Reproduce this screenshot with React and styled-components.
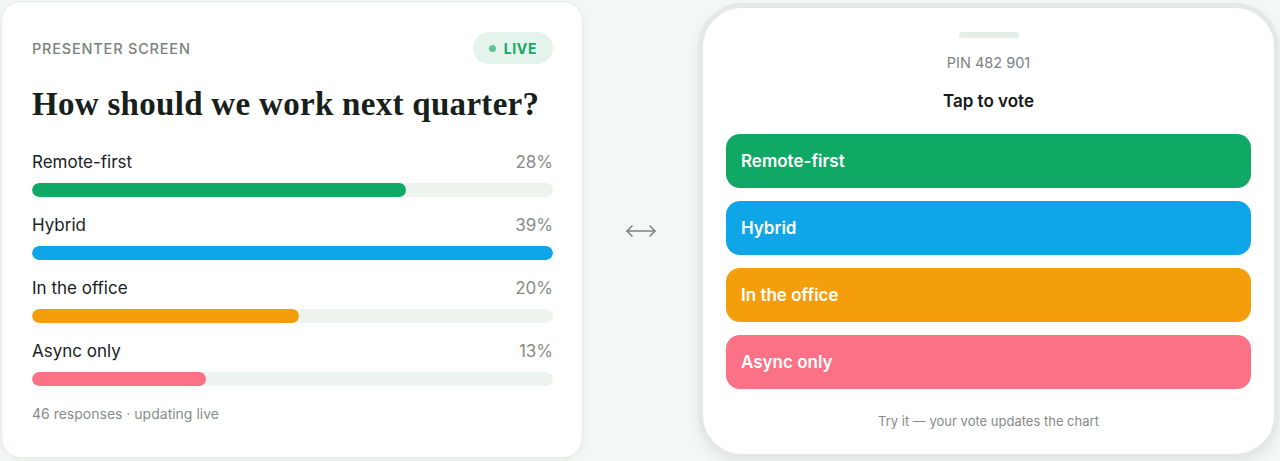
import React from 'react';
import styled, { createGlobalStyle } from 'styled-components';

const GlobalStyle = createGlobalStyle`
  html, body {
    margin: 0;
    padding: 0;
    background: #f3f7f5;
    font-family: Inter, "Liberation Sans", sans-serif;
    -webkit-font-smoothing: antialiased;
  }
`;

const options = [
  { label: 'Remote-first', pct: 28, color: '#10a865' },
  { label: 'Hybrid', pct: 39, color: '#0ea5e9' },
  { label: 'In the office', pct: 20, color: '#f59e0b' },
  { label: 'Async only', pct: 13, color: '#fb7185' },
];

const Stage = styled.div`
  display: flex;
  align-items: flex-start;
  padding: 1px 0 0 1px;
`;

const Card = styled.section`
  box-sizing: border-box;
  width: 582px;
  height: 457px;
  padding: 30px 29px 30px 30px;
  background: #fff;
  border: 1px solid #e6ebe8;
  border-radius: 20px;
  box-shadow: 0 4px 14px rgba(20, 40, 30, 0.04);
  display: flex;
  flex-direction: column;
`;

const Header = styled.div`
  display: flex;
  align-items: center;
  justify-content: space-between;
  height: 32px;
`;

const Eyebrow = styled.span`
  font-size: 14.5px;
  font-weight: 500;
  letter-spacing: 0.8px;
  text-transform: uppercase;
  color: #7c837f;
`;

const LivePill = styled.span`
  display: inline-flex;
  align-items: center;
  gap: 8px;
  height: 32px;
  padding: 0 16px;
  border-radius: 16px;
  background: #e4f4ec;
  color: #17a566;
  font-size: 14px;
  font-weight: 700;
  letter-spacing: 0.6px;
`;

const Dot = styled.span`
  width: 7px;
  height: 7px;
  border-radius: 50%;
  background: #5cc595;
`;

const Title = styled.h1`
  margin: 22px 0 0;
  font-family: "Liberation Serif", "DejaVu Serif", serif;
  font-size: 33px;
  line-height: 36px;
  font-weight: 700;
  letter-spacing: 0.3px;
  white-space: nowrap;
  color: #17201b;
`;

const Results = styled.div`
  margin-top: 29px;
  display: flex;
  flex-direction: column;
  gap: 17px;
`;

const Row = styled.div`
  display: flex;
  flex-direction: column;
  gap: 10px;
`;

const RowHead = styled.div`
  display: flex;
  justify-content: space-between;
  font-size: 17px;
  line-height: 22px;
`;

const Label = styled.span`
  color: #1b211e;
`;

const Pct = styled.span`
  color: #868c89;
`;

const Track = styled.div`
  height: 14px;
  border-radius: 7px;
  background: #edf3ef;
  overflow: hidden;
`;

const Fill = styled.div`
  height: 100%;
  border-radius: 7px;
  background: ${(p) => p.$color};
`;

const Footnote = styled.p`
  margin: 18px 0 0;
  font-size: 14px;
  line-height: 20px;
  color: #878d8a;
`;

const Bridge = styled.div`
  width: 115px;
  height: 460px;
  display: flex;
  align-items: center;
  justify-content: center;
  color: #7e8581;
`;

const Phone = styled.section`
  box-sizing: border-box;
  width: 581px;
  height: 456px;
  margin-top: 2px;
  padding: 24px 23px 0;
  background: #fff;
  border: 5px solid #e4e8e6;
  border-radius: 44px;
  box-shadow: 0 6px 14px rgba(20, 40, 30, 0.06);
  display: flex;
  flex-direction: column;
  align-items: stretch;
`;

const Handle = styled.div`
  align-self: center;
  width: 60px;
  height: 6px;
  border-radius: 3px;
  background: #e5efea;
`;

const Pin = styled.div`
  margin-top: 15px;
  text-align: center;
  font-size: 14.5px;
  line-height: 20px;
  color: #7c827f;
`;

const Prompt = styled.div`
  margin-top: 17px;
  text-align: center;
  font-size: 17px;
  line-height: 22px;
  font-weight: 600;
  color: #141a17;
`;

const Choices = styled.div`
  margin-top: 22px;
  display: flex;
  flex-direction: column;
  gap: 13px;
`;

const Choice = styled.button`
  height: 54px;
  border: 0;
  border-radius: 14px;
  padding: 0 15px;
  text-align: left;
  font-family: inherit;
  font-size: 17px;
  font-weight: 600;
  color: #fff;
  background: ${(p) => p.$color};
  cursor: pointer;
`;

const Hint = styled.div`
  margin-top: 23px;
  text-align: center;
  font-size: 13px;
  line-height: 18px;
  color: #858b88;
`;

function BothWays() {
  return (
    <svg width="32" height="14" viewBox="0 0 32 14" fill="none" stroke="currentColor" strokeWidth="1.6" strokeLinecap="round" strokeLinejoin="round">
      <path d="M2 7h28" />
      <path d="M7 2L2 7l5 5" />
      <path d="M25 2l5 5-5 5" />
    </svg>
  );
}

export default function App() {
  const max = Math.max(...options.map((o) => o.pct));
  return (
    <>
      <GlobalStyle />
      <Stage>
        <Card>
          <Header>
            <Eyebrow>Presenter screen</Eyebrow>
            <LivePill>
              <Dot />
              LIVE
            </LivePill>
          </Header>
          <Title>How should we work next quarter?</Title>
          <Results>
            {options.map((o) => (
              <Row key={o.label}>
                <RowHead>
                  <Label>{o.label}</Label>
                  <Pct>{o.pct}%</Pct>
                </RowHead>
                <Track>
                  <Fill $color={o.color} style={{ width: `${(o.pct / max) * 100}%` }} />
                </Track>
              </Row>
            ))}
          </Results>
          <Footnote>46 responses · updating live</Footnote>
        </Card>
        <Bridge>
          <BothWays />
        </Bridge>
        <Phone>
          <Handle />
          <Pin>PIN 482 901</Pin>
          <Prompt>Tap to vote</Prompt>
          <Choices>
            {options.map((o) => (
              <Choice key={o.label} $color={o.color}>
                {o.label}
              </Choice>
            ))}
          </Choices>
          <Hint>Try it — your vote updates the chart</Hint>
        </Phone>
      </Stage>
    </>
  );
}
